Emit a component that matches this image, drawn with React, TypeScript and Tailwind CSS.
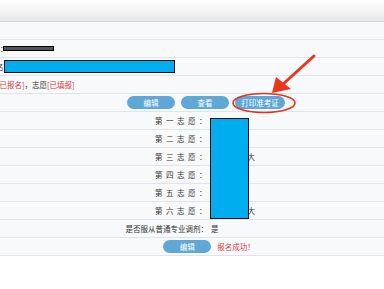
import React from "react";

const FONT = { fontFamily: '"Noto Sans CJK SC", "Liberation Sans", sans-serif' };

const choices = ["一", "二", "三", "四", "五", "六"];

function Btn({ label, w = "w-[48px]" }: { label: string; w?: string }) {
  return (
    <span
      className={`${w} flex h-[13px] items-center justify-center rounded-full bg-[#5fa7d5] text-[7.5px] leading-none text-white`}
    >
      {label}
    </span>
  );
}

function Row({ children, className = "" }: { children?: React.ReactNode; className?: string }) {
  return (
    <div className={`flex h-[18px] items-center border-b border-[#dfe4ea] bg-[#f7f9fb] ${className}`}>
      {children}
    </div>
  );
}

export default function App() {
  return (
    <div className="relative h-[289px] w-[384px] overflow-hidden bg-white text-[7.5px] text-[#333]" style={FONT}>
      {/* header strip */}
      <div className="h-[22px] border-b border-[#d6d6d6] bg-gradient-to-b from-white to-[#e9e9e9]" />

      <Row />

      <Row>
        <span className="w-[3px] whitespace-nowrap">：</span>
        <span className="h-[5px] w-[51px] border border-black bg-[#555]" />
      </Row>

      <Row>
        <span className="ml-[-4px] whitespace-nowrap">名</span>
        <span className="h-[13px] w-[171px] border-[1.5px] border-[#111] bg-[#00adef]" />
      </Row>

      <Row>
        <span className="ml-[-3px] whitespace-nowrap">
          <span className="text-[#d8383a]">[已报名]</span>
          <span>，志愿</span>
          <span className="text-[#d8383a]">[已填报]</span>
        </span>
      </Row>

      <Row className="justify-center gap-[6px] pl-[28px]">
        <Btn label="编辑" />
        <Btn label="查看" />
        <Btn label="打印准考证" w="w-[50px]" />
      </Row>

      {choices.map((c, i) => (
        <Row key={c}>
          <span className="w-[210px] whitespace-nowrap pr-[0px] text-right tracking-[3.5px]">
            第{c}志愿：
          </span>
          {(i === 2 || i === 5) && <span className="whitespace-nowrap">某某某某某大</span>}
        </Row>
      ))}

      <Row>
        <span className="w-[210px] whitespace-nowrap pr-[2px] text-right">是否服从普通专业调剂：</span>
        <span className="pl-[1px]">是</span>
      </Row>

      <Row className="justify-center gap-[6px] pl-[34px]">
        <Btn label="编辑" />
        <span className="text-[#d8383a]">报名成功！</span>
      </Row>

      {/* redaction block over the choice values */}
      <div className="absolute left-[210px] top-[118px] h-[101px] w-[39px] border-[1.5px] border-[#111] bg-[#00adef]" />

      {/* annotation: red ellipse and arrow */}
      <svg className="pointer-events-none absolute left-0 top-0" width="384" height="289" viewBox="0 0 384 289">
        <ellipse cx="264" cy="103" rx="31" ry="9.5" fill="none" stroke="#e2321f" strokeWidth="1.6" />
        <line x1="314" y1="56" x2="281" y2="86" stroke="#e8361f" strokeWidth="3" strokeLinecap="round" />
        <polygon points="272,93 276,77 291,89" fill="#e8361f" />
      </svg>
    </div>
  );
}
